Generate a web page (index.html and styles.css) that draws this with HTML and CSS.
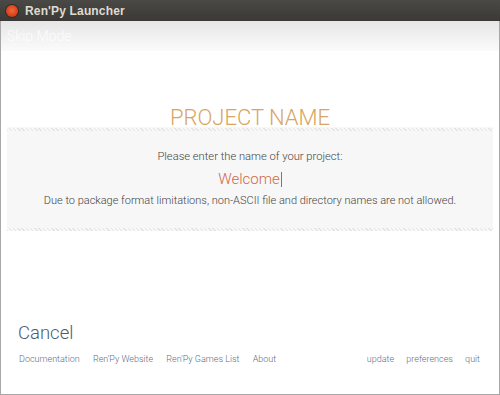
FILE: index.html
```html
<!DOCTYPE html>
<html lang="en">
<head>
    <meta charset="UTF-8">
    <title>Ren'Py Launcher</title>
    <link rel="stylesheet" href="styles.css">
</head>
<body>
    <div class="titlebar">
        <span class="close"></span>
        <span class="title">Ren'Py Launcher</span>
    </div>
    <div class="window">
        <div class="header">Skip Mode</div>

        <h1>PROJECT NAME</h1>

        <div class="panel">
            <div class="zigzag"></div>
            <div class="panel-body">
                <p class="prompt">Please enter the name of your project:</p>
                <p class="input">Welcome<span class="caret"></span></p>
                <p class="note">Due to package format limitations, non-ASCII file and directory names are not allowed.</p>
            </div>
            <div class="zigzag"></div>
        </div>

        <div class="spacer"></div>

        <div class="cancel">Cancel</div>
        <div class="links">
            <div class="left">
                <a>Documentation</a>
                <a>Ren'Py Website</a>
                <a>Ren'Py Games List</a>
                <a>About</a>
            </div>
            <div class="right">
                <a>update</a>
                <a>preferences</a>
                <a>quit</a>
            </div>
        </div>
    </div>
</body>
</html>
```

FILE: styles.css
```css
html, body {
    margin: 0;
    padding: 0;
}
body {
    width: 500px;
    height: 395px;
    overflow: hidden;
    font-family: Roboto, "Liberation Sans", sans-serif;
    font-weight: 300;
    background-color: #fff;
}
.titlebar {
    height: 21px;
    background: linear-gradient(#4a4945, #3a3935);
    display: flex;
    align-items: center;
    padding-left: 6px;
    box-sizing: border-box;
}
.close {
    width: 12px;
    height: 12px;
    border-radius: 50%;
    background: radial-gradient(circle at 50% 45%, #f06a3c 0, #e0441c 55%, #9a2c10 100%);
    box-shadow: 0 0 0 1px #2e2d2a;
}
.title {
    margin-left: 7px;
    color: #dfdbd2;
    font-family: "Liberation Sans", sans-serif;
    font-weight: bold;
    font-size: 12px;
    letter-spacing: 0.15px;
}
.window {
    height: 374px;
    box-sizing: border-box;
    border: 1px solid #a8a8a8;
    border-top: none;
    display: flex;
    flex-direction: column;
}
.header {
    height: 30px;
    background: linear-gradient(#e6e6e6, #fbfbfb);
    color: rgba(255, 255, 255, 0.85);
    font-size: 14px;
    padding: 7px 0 0 6px;
    box-sizing: border-box;
}
h1 {
    margin: 54px 0 0 0;
    height: 22px;
    line-height: 26px;
    text-align: center;
    font-weight: 300;
    font-size: 22px;
    color: #d9a562;
}
.panel {
    margin: 0 6px;
    background-color: #f7f7f7;
    height: 104px;
    display: flex;
    flex-direction: column;
}
.zigzag {
    height: 3px;
    margin-top: 1px;
    background-image: repeating-linear-gradient(45deg, #e4e4e4 0, #e4e4e4 1px, transparent 1px, transparent 3px);
}
.panel-body {
    flex: 1;
    display: flex;
    flex-direction: column;
    align-items: center;
    padding-top: 17px;
}
.panel-body p {
    margin: 0;
    text-align: center;
}
.prompt {
    font-size: 11.2px;
    color: #444;
    line-height: 18px;
}
.input {
    font-size: 15px;
    color: #cf6a48;
    line-height: 26px;
    display: flex;
    align-items: center;
}
.caret {
    display: inline-block;
    width: 1px;
    height: 15px;
    background-color: #c06040;
    margin-left: 1px;
}
.note {
    font-size: 11px;
    color: #444;
    line-height: 18px;
}
.spacer {
    flex: 1;
}
.cancel {
    font-size: 18.5px;
    color: #4d5d6e;
    padding-left: 17px;
    line-height: 24px;
}
.links {
    display: flex;
    justify-content: space-between;
    padding: 8px 19px 29px 18px;
    font-size: 9px;
    color: #5f6f80;
    line-height: 12px;
}
.links a {
    margin-right: 11px;
}
.links .right a {
    margin-right: 0;
    margin-left: 10px;
}
```
